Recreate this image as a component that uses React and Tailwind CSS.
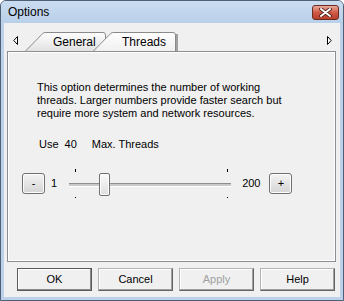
import React from 'react';

const font = { fontFamily: '"Liberation Sans", Arial, sans-serif' };

const TabShape = ({ id, width, from, to, shadow }) => (
  <svg className="absolute inset-0" width={width} height="20" viewBox={`0 0 ${width} 20`}>
    <defs>
      <linearGradient id={id} x1="0" y1="0" x2="0" y2="1">
        <stop offset="0" stopColor={from} />
        <stop offset="1" stopColor={to} />
      </linearGradient>
    </defs>
    <path
      d={`M0.5,20 L18,2.2 Q19,1.5 21,1.5 L${width - 5},1.5 Q${width - 2.5},1.5 ${width - 2.5},4 L${width - 2.5},20`}
      fill={`url(#${id})`}
      stroke="#8a8a8a"
      strokeWidth="1"
    />
    {shadow && <line x1={width - 1} y1="3" x2={width - 1} y2="20" stroke="#6f6f6f" strokeWidth="1.2" />}
  </svg>
);

const Arrow = ({ dir }) => (
  <svg width="6" height="9" viewBox="0 0 6 9">
    {dir === 'left' ? (
      <path d="M4.5,0.5 L0.8,4.5 L4.5,8.5 Z" fill="#fff" stroke="#000" strokeWidth="1" />
    ) : (
      <path d="M1.5,0.5 L5.2,4.5 L1.5,8.5 Z" fill="#fff" stroke="#000" strokeWidth="1" />
    )}
  </svg>
);

const SmallButton = ({ children }) => (
  <div className="w-[23px] h-[21px] rounded-[3px] border border-[#707070] bg-gradient-to-b from-[#f4f4f4] to-[#d4d4d4] shadow-[inset_0_0_0_1px_#fcfcfc] flex items-center justify-center text-[11px] text-black leading-none">
    {children}
  </div>
);

const DialogButton = ({ children, primary, disabled }) => (
  <div
    className={`w-[75px] h-[23px] flex items-center justify-center text-[11px] bg-[#f0f0f0] border ${
      primary
        ? 'border-[#5a5a5a] shadow-[inset_-1px_-1px_0_#8a8a8a,inset_1px_1px_0_#fff]'
        : 'border-t-[#b4b4b4] border-l-[#b4b4b4] border-b-[#646464] border-r-[#646464] shadow-[inset_-1px_-1px_0_#a0a0a0,inset_1px_1px_0_#fff]'
    } ${disabled ? 'text-[#a0a0a0]' : 'text-black'}`}
  >
    {children}
  </div>
);

export default function App() {
  return (
    <div className="w-[344px] h-[301px] bg-white" style={font}>
      <div className="w-[344px] h-[301px] flex flex-col border border-[#4f6075] rounded-t-[6px] bg-[#bcd2ea]">
        {/* title bar */}
        <div className="h-[22px] flex items-center justify-between pl-[7px] pr-[4px] rounded-t-[5px] bg-gradient-to-b from-[#cadcf0] to-[#b9d0e9]">
          <span className="text-[12px] text-black">Options</span>
          <div className="w-[27px] h-[15px] mt-[1px] rounded-[3px] border border-[#6b2c22] bg-gradient-to-b from-[#e8a99b] via-[#cf5a45] to-[#b8402c] flex items-center justify-center">
            <svg width="13" height="9" viewBox="0 0 13 9">
              <path d="M2,1 L11,8 M11,1 L2,8" stroke="#4a1a12" strokeWidth="3.6" strokeLinecap="round" />
              <path d="M2,1 L11,8 M11,1 L2,8" stroke="#fff" strokeWidth="2" strokeLinecap="round" />
            </svg>
          </div>
        </div>

        {/* body */}
        <div className="mx-[3px] h-[274px] bg-[#f0f0f0] flex flex-col">
          {/* tab row */}
          <div className="flex h-[28px]">
            <div className="mt-[13px] ml-[9px]">
              <Arrow dir="left" />
            </div>
            <div className="mt-[8px] ml-[6px] flex h-[20px]">
              <div className="relative w-[83px] h-[20px] flex items-center">
                <TabShape id="g1" width={83} from="#fdfdfd" to="#e2e2e2" />
                <span className="relative pl-[28px] pt-[2px] text-[12px] text-black">General</span>
              </div>
              <div className="relative z-10 -ml-[15px] w-[85px] h-[20px] flex items-center">
                <TabShape id="g2" width={85} from="#ffffff" to="#f0f0f0" shadow />
                <span className="relative pl-[29px] pt-[2px] text-[12px] text-black">Threads</span>
              </div>
            </div>
            <div className="flex-1" />
            <div className="mt-[13px] mr-[8px]">
              <Arrow dir="right" />
            </div>
          </div>

          {/* panel */}
          <div className="ml-[3px] w-[329px] h-[211px] border border-[#8c8e94] shadow-[inset_1px_1px_0_#fff,inset_-1px_-1px_0_#fff] bg-[#f0f0f0] flex flex-col text-[11px] text-black">
            <p className="mt-[29px] ml-[29px] leading-[13px] whitespace-nowrap">
              This option determines the number of working
              <br />
              threads. Larger numbers provide faster search but
              <br />
              require more system and network resources.
            </p>

            <div className="mt-[18px] ml-[31px] flex leading-[13px]">
              <span>Use</span>
              <span className="ml-[6px]">40</span>
              <span className="ml-[15px]">Max. Threads</span>
            </div>

            <div className="mt-[17px] ml-[14px] h-[30px] flex items-center">
              <SmallButton>-</SmallButton>
              <span className="ml-[6px]">1</span>
              <div className="relative ml-[12px] w-[162px] h-[30px] flex flex-col">
                <div className="mt-[1px] flex justify-between pl-[6px] pr-[3px]">
                  <div className="w-px h-[3px] bg-black" />
                  <div className="w-px h-[3px] bg-black" />
                </div>
                <div className="mt-[11px] h-[4px] border-t border-[#8e8e8e] bg-[#c9c9c9] border-b border-b-white" />
                <div className="mt-[10px] flex justify-between pl-[6px] pr-[3px]">
                  <div className="w-px h-px bg-black" />
                  <div className="w-px h-px bg-black" />
                </div>
                <div className="absolute left-[30px] top-[5px] w-[11px] h-[23px] rounded-[2px] border border-[#707070] bg-gradient-to-b from-[#fbfbfb] to-[#dedede] shadow-[inset_0_0_0_1px_#fff]" />
              </div>
              <span className="ml-[11px]">200</span>
              <div className="ml-[9px]">
                <SmallButton>+</SmallButton>
              </div>
            </div>
          </div>

          {/* buttons */}
          <div className="mt-[6px] ml-[13px] flex gap-[6px]">
            <DialogButton primary>OK</DialogButton>
            <DialogButton>Cancel</DialogButton>
            <DialogButton disabled>Apply</DialogButton>
            <DialogButton>Help</DialogButton>
          </div>
        </div>
      </div>
    </div>
  );
}
